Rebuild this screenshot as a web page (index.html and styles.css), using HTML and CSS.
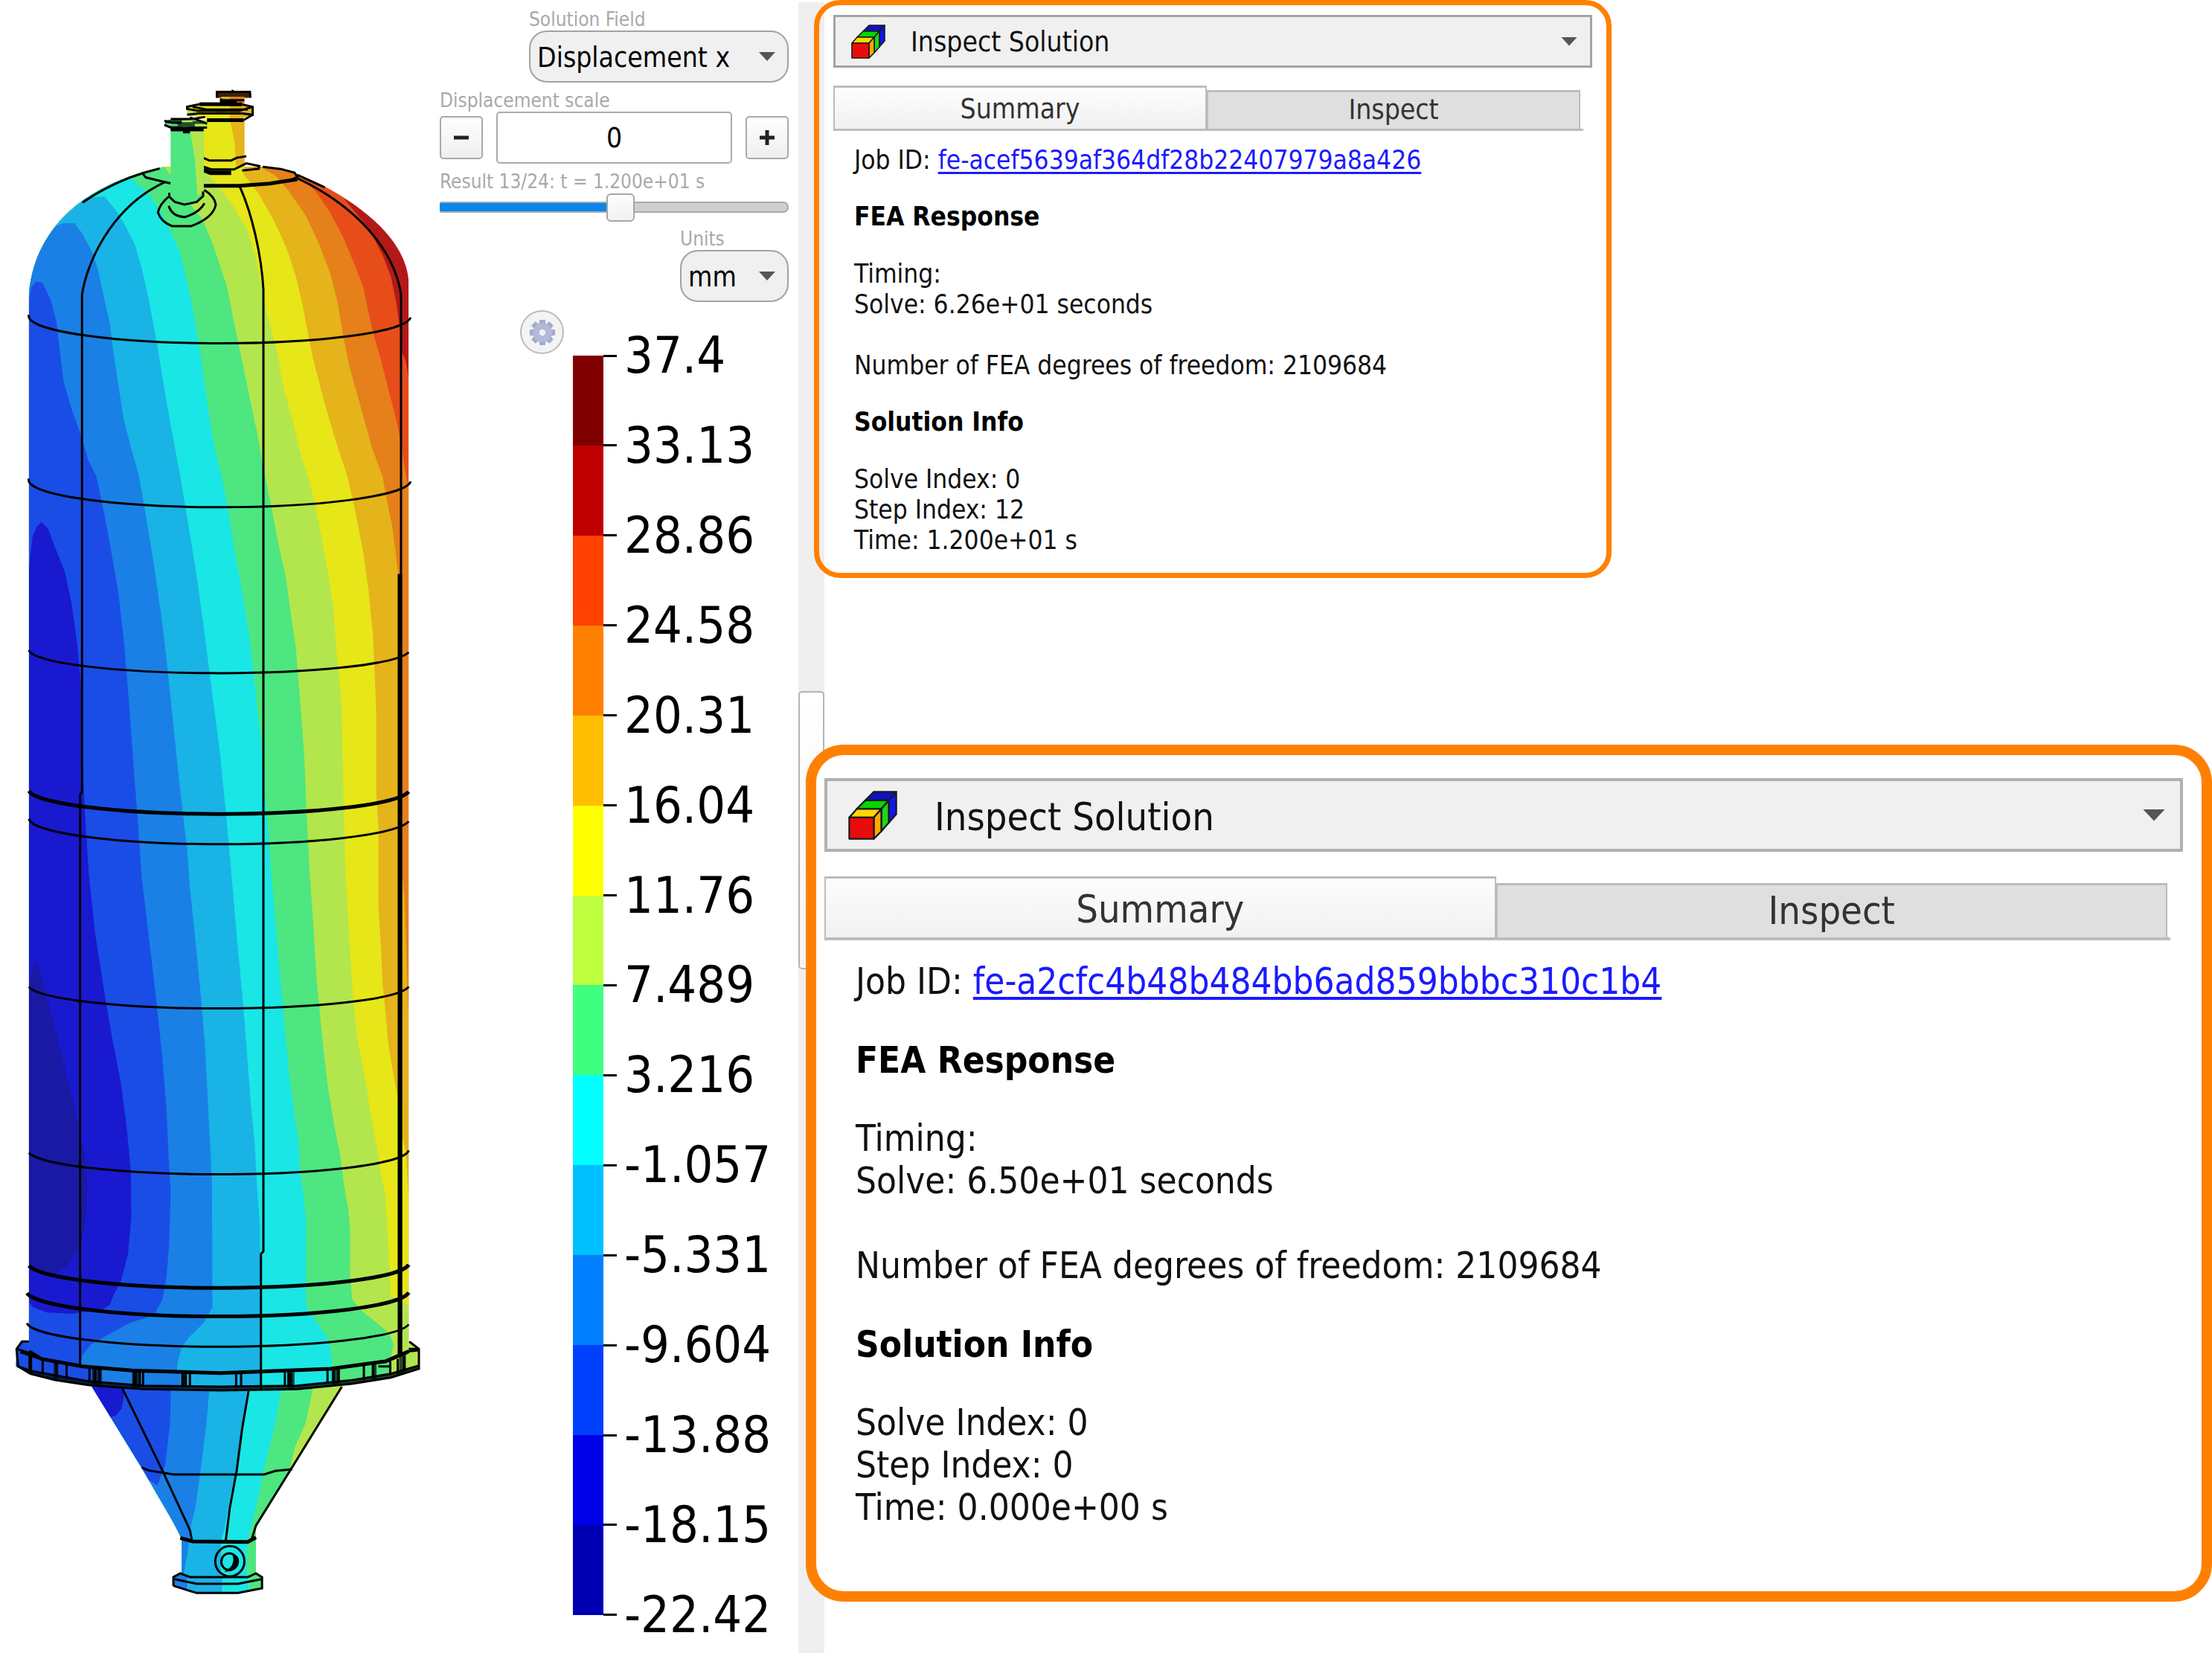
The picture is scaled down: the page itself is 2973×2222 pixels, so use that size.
FILE: index.html
```html
<!DOCTYPE html>
<html lang="en">
<head>
<meta charset="utf-8">
<title>Inspect Solution</title>
<link rel="stylesheet" href="styles.css">
</head>
<body>
<svg class="defs" width="0" height="0" aria-hidden="true">
  <symbol id="cube" viewBox="0 0 46 46">
    <g stroke="#1a1a1a" stroke-width="1.6" stroke-linejoin="round">
      <path d="M16 9L24 1H45L38 9z" fill="#1010c8"/>
      <path d="M38 9L45 1V22L38 30z" fill="#1414f0"/>
      <path d="M8 17L16 9H38L31 17z" fill="#00d800"/>
      <path d="M31 17L38 9V30L31 38z" fill="#1fd41f"/>
      <path d="M1 25L8 17H31L24 25z" fill="#ffd800"/>
      <path d="M24 25L31 17V38L24 45z" fill="#ffa800"/>
      <path d="M1 25H24V45H1z" fill="#ea0c0c"/>
    </g>
  </symbol>
</svg>

<main class="page">
  <section class="viewer" aria-label="Result view">
    <svg class="model" viewBox="0 0 591 2222" role="img" aria-label="Pressure vessel, displacement x">
      <defs>
        <clipPath id="shell"><path d="M105 830C120 620 260 420 600 347H950Q1020 350 1080 375C1260 450 1475 600 1485 780V4820L1450 4860 1200 4900 950 4915 600 4905 300 4885 105 4820z"/></clipPath>
        <clipPath id="cone"><path d="M330 545L515 880 630 1100 660 1165V1320H930V1120L1062 880 1248 550z"/></clipPath>
        <clipPath id="flange"><path d="M60 400L80 370H105V410L150 440 300 470 480 487 800 497 1200 480 1400 450 1485 410 1487 370 1524 400 1522 480 1420 515 1280 540 1080 562 800 567 520 562 320 545 200 525 110 500 58 470z"/></clipPath>
      </defs>

      <g transform="translate(0 1680) scale(.36992 .33333)">
        <g clip-path="url(#cone)">
          <path fill="#e6e619" d="M300 500H1300V1400H300z"/>
          <path fill="#b3e64d" d="M300 500H1250L1200 640 1050 900V1400H300z"/>
          <path fill="#4de680" d="M300 500H1148L1110 700 1070 800 1052 890V1400H300z"/>
          <path fill="#1ae6e6" d="M300 500H1032L1000 700 960 880 930 1040 905 1150 897 1200V1400H300z"/>
          <path fill="#1ab3e6" d="M300 500H905L880 720 860 880 835 1000 815 1130 803 1170 800 1400H300z"/>
          <path fill="#1a80e6" d="M300 500H765L750 700 730 880 710 1040 690 1130 682 1220 665 1320H300z"/>
          <path fill="#1a4de6" d="M300 500H622L618 700 600 870 572 950 500 900z"/>
          <path fill="#1919d0" d="M300 500H450V590L442 640 420 670 380 680z"/>
        </g>
        <g class="edge">
          <path d="M445 560L590 890 690 1130 697 1170M903 570L880 720 860 890 835 1040 820 1175M1242 552L1060 880 930 1112 915 1165"/>
          <path d="M515 878L540 890 630 906H960L1000 892 1062 885"/>
          <path class="thick" d="M655 1162L700 1176 900 1178 930 1160"/>
        </g>
        <path fill="#1a80e6" d="M630 1320L655 1305 682 1320V1378L630 1355z"/>
        <path fill="#1ab3e6" d="M682 1318H808V1385H715L682 1378z"/>
        <path fill="#1ae6e6" d="M808 1318H905V1378L865 1385H808z"/>
        <path fill="#4de680" d="M905 1318L930 1305 952 1320V1365L905 1378z"/>
        <g class="edge">
          <path d="M630 1355V1320L655 1305 690 1320H900L930 1305 952 1320V1365L865 1384H715L630 1355M635 1328L715 1347H865L950 1328"/>
          <ellipse cx="835" cy="1256" rx="53" ry="61"/>
          <ellipse cx="833" cy="1258" rx="29" ry="34" fill="#1ae6e6"/>
        </g>
        <path d="M838 1222Q872 1232 868 1262 862 1298 815 1298 842 1280 846 1262 852 1238 838 1222z"/>
      </g>

      <g transform="translate(0 100) scale(.36992 .35714)">
        <g clip-path="url(#shell)">
          <path fill="#b31919" d="M0 300H1568V5000H0z"/>
          <path fill="#e64d19" d="M0 300H1100L1240 455 1340 580 1390 680 1420 760 1440 860 1450 935 1462 1050 1475 1080 1485 1145V5000H0z"/>
          <path fill="#e5801a" d="M0 300H1040L1085 375 1150 445 1200 520 1250 620 1290 720 1320 800 1340 900 1355 970 1380 1060 1410 1180 1440 1300 1460 1400 1470 1480 1485 1560V5000H0z"/>
          <path fill="#e5b31a" d="M0 300H900L940 345 1000 380 1050 440 1110 530 1160 640 1200 750 1225 850 1250 1000 1270 1100 1310 1250 1350 1400 1390 1512 1405 1600 1425 1700 1447 1880 1462 1900V3020L1470 3100 1478 3360 1485 3560V5000H0z"/>
          <path fill="#e6e619" d="M0 300H850L885 375 940 450 990 540 1040 650 1075 760 1100 870 1120 980 1140 1080 1180 1240 1220 1380 1262 1512 1290 1640 1320 1800 1340 1950 1355 2110 1360 2220 1367 2400V2700L1375 2830V3130L1383 3260 1390 3420 1400 3520 1410 3640 1425 3740 1445 3850 1463 3860V4000L1475 4060 1485 4240V5000H0z"/>
          <path fill="#b3e64d" d="M0 300H700L750 370 800 430 850 500 900 590 930 690 950 800 970 900 990 980 1010 1060 1030 1180 1060 1290 1090 1420 1118 1512 1145 1620 1170 1750 1195 1900 1210 2000 1225 2200 1240 2350 1245 2560 1250 2800 1255 3000 1262 3120 1270 3280 1283 3480 1300 3640 1330 3800 1350 3930 1370 4040 1380 4120 1400 4220 1405 4300 1415 4480 1420 4600 1450 4610 1485 4635V5000H0z"/>
          <path fill="#4de680" d="M0 350H600L700 500 735 545 770 630 800 720 825 800 840 880 860 980 880 1080 910 1230 940 1380 955 1470 965 1520 985 1620 1010 1760 1040 1900 1055 2020 1075 2160 1090 2350 1105 2560 1115 2800 1125 3000 1135 3150 1150 3400 1170 3620 1190 3800 1215 3960 1235 4060 1250 4180 1265 4270 1272 4350V4530L1280 4610 1310 4650 1370 4700 1415 4740 1430 4780 1420 4830V5000H0z"/>
          <path fill="#1ae6e6" d="M0 300H400L480 395 540 450 580 510 620 590 650 660 680 780 700 880 715 970 730 1060 745 1180 765 1320 785 1430 805 1512 830 1640 850 1780 880 1950 905 2110 920 2240 935 2390 950 2520 955 2680 965 2740 975 2850 985 3000 1000 3180 1015 3360 1030 3540 1050 3760 1070 3920 1085 4020 1090 4130 1105 4230 1112 4330V4640L1140 4680 1185 4750 1200 4790 1205 4850 1200 5000H0z"/>
          <path fill="#1ab3e6" d="M0 480L345 462 380 460 420 510 450 560 490 640 515 730 535 820 550 900 570 1010 595 1170 620 1320 640 1430 655 1512 685 1700 715 1890 740 2080 760 2240 780 2400 800 2560 815 2720 830 2880 842 3024 860 3240 880 3460 895 3650 910 3860 925 4020 935 4200 945 4340V5000H0z"/>
          <path fill="#1a80e6" d="M0 600L205 570 230 560H270L300 600 335 670 355 730 380 850 400 940 410 1030 430 1170 450 1300 480 1420 505 1512 530 1660 560 1850 585 2030 605 2200 625 2400 645 2600 660 2740 680 2920 690 3060 710 3260 730 3470 745 3660 755 3860 765 4060 770 4160 772 4640 740 4700 690 4750 660 4790 645 4850 640 5000H0z"/>
          <path fill="#1a4de6" d="M105 850L115 800 130 780 155 785 185 850 205 930 215 1020 230 1150 260 1260 295 1360 320 1450 350 1512 380 1660 405 1800 430 1950 450 2130 470 2380 485 2600 500 2800 515 3024 540 3240 565 3460 590 3700 605 3900 612 4060 620 4200 615 4400 605 4530 590 4610 560 4670 470 4700 400 4740 330 4780 300 4820 290 4860 300 5000H0V850z"/>
          <path fill="#1919d0" d="M105 1860L118 1740 135 1700 150 1685 175 1710 200 1780 235 1870 260 1990 280 2140 295 2300 300 2600 310 2800 322 3000 345 3230 380 3460 410 3640 440 3800 460 3960 475 4120 477 4300 465 4440 440 4540 410 4600 400 4630 370 4650 260 4665 170 4660 120 4640 105 4620z"/>
          <path fill="#1919a6" d="M105 3450L120 3350 133 3340 160 3430 200 3590 240 3760 270 3880 290 3990 310 4080 318 4180 310 4330 280 4430 240 4490 190 4520 140 4500 105 4480z"/>
        </g>
        <g class="edge">
          <path d="M298 2705V830C312 720 400 500 600 405M298 2700L291 2712V4860"/>
          <path d="M870 420C915 520 950 680 957 810V4430L948 4440V4915"/>
          <path d="M1080 390C1340 520 1440 700 1457 830V4860"/>
          <path class="heavy" d="M1453 1880V4860"/>
          <path d="M105 905A693 102 0 0 0 1492 915M105 1522A693 102 0 0 0 1492 1532M105 2167A693 90 0 0 0 1485 2175M105 2802A693 98 0 0 0 1485 2812M105 3434A693 90 0 0 0 1485 3434M105 4059A693 93 0 0 0 1485 4050M98 4700A696 94 0 0 0 1485 4705"/>
          <path class="thick" d="M105 2697A693 94 0 0 0 1485 2700M105 4484A693 94 0 0 0 1485 4480M98 4587A696 97 0 0 0 1485 4585"/>
          <path d="M300 482Q430 390 580 354M520 375L530 388 585 402 620 410M955 348L1020 356 1070 370 1080 385 1050 402M1080 378L1180 425"/>
          <path class="thick" d="M740 419H870L980 411 1080 395"/>
        </g>

        <path fill="#e6e619" d="M738 170H888V370H738z"/>
        <path fill="#e5b31a" d="M835 170H888V345H858L852 250z"/>
        <path fill="#e6e619" d="M680 120L720 110H880L918 122V150L880 165H740L680 152z"/>
        <path fill="#b3e64d" d="M680 138H706V158L680 152z"/>
        <path fill="#e5b31a" d="M835 112H880L918 122V150L880 165H835z"/>
        <path fill="#3a2208" d="M788 65H908V88H788z"/>
        <path fill="#e5801a" d="M835 84H888V110H835zM780 130H820V142H780z"/>
        <path fill="#e5b31a" d="M803 84H835V95H803z"/>
        <g class="edge">
          <path d="M788 88V66H908L910 88M845 58V66M803 90V108M806 97H888"/>
          <path class="thick" d="M806 103H860M725 112L880 113M752 172H885"/>
          <path d="M725 112L680 122V130L720 137H870L918 122M700 122L750 132H900M680 152L720 147H880L918 152V122L880 113M885 172L918 152"/>
          <path d="M740 315L760 324H840L860 314 895 308M740 348L770 358H850L895 335 942 345 940 355 880 362"/>
          <path class="heavy" d="M740 360L765 370H840"/>
        </g>
        <path fill="#4de680" d="M620 205H740V440L720 475 670 490 630 478 620 450z"/>
        <path fill="#b3e64d" d="M690 212H740V440L718 460 708 320 697 250z"/>
        <path fill="#244f2c" d="M600 173L640 168 752 180V200L700 208 600 195z"/>
        <path fill="#4de680" d="M602 184H645V194H602zM665 196H692V203H665z"/>
        <path fill="#b3e64d" d="M660 172H700V180H660zM708 186H752V196H708z"/>
        <g class="edge">
          <path d="M597 175L625 182H660M620 168H700L745 160M690 162L735 178 752 186M597 190L625 202 752 200"/>
          <path class="thick" d="M620 207H740M665 215H690"/>
          <path d="M615 445V460L635 480 670 490 715 480 738 458V440M613 495Q625 535 672 537 725 520 743 485M615 458Q578 490 574 520 585 555 625 571H695Q775 540 784 490 780 460 742 435"/>
        </g>
      </g>

      <g transform="translate(0 1680) scale(.36992 .33333)">
        <g clip-path="url(#flange)">
          <path fill="#b3e64d" d="M0 350H1568V600H0z"/>
          <path fill="#4de680" d="M0 350H1420V600H0z"/>
          <path fill="#1ae6e6" d="M0 350H1210V600H0z"/>
          <path fill="#1ab3e6" d="M0 350H945V600H0z"/>
          <path fill="#1a80e6" d="M0 350H655V600H0z"/>
          <path fill="#1a4de6" d="M0 350H340V600H0z"/>
          <path class="shade" d="M58 470L110 490 320 530 520 548 800 552 1080 548 1280 526 1420 500 1524 470V600H0z"/>
          <path class="shade" d="M335 470H370V550H335zM480 470H508V570H480zM1045 470H1070V570H1045zM1205 470H1235V570H1205zM1350 440H1368V560H1350zM1450 420H1475V530H1450zM195 440H212V540H195z"/>
        </g>
        <g class="edge">
          <path d="M105 370H80L60 400 66 470 110 500 200 525 320 545 520 562 800 567 1080 562 1280 540 1420 515 1522 480V400L1487 370M60 400L105 415M1524 400H1485"/>
          <path class="thick" d="M105 410L150 440 300 470 480 487 800 497 1200 480 1400 450 1485 410"/>
          <path d="M66 470L110 488 320 530 520 548 800 552 1080 548 1280 526 1420 500 1520 468"/>
          <path d="M155 440V495M205 458V515M242 462V520M325 475V535M345 475V540M362 480V540M508 490V550M520 490V552M675 498V555M690 498V555M858 498V555M876 498V555M948 498V560M1035 495V550M1048 495V550M1190 485V540M1212 482V540M1230 480V535M1322 468V525M1356 460V518M1418 450V505M1445 440V500M1468 430V490M1480 410L1522 405M1375 470H1415"/>
          <path class="thick" d="M110 430V498M75 410L140 435M490 490V550M665 498V555M1055 495V550"/>
        </g>
      </g>
    </svg>

    <form class="controls">
      <label class="caption field-w" for="field">Solution Field</label>
      <div class="drop field-w">
        <select id="field"><option>Displacement x</option></select>
      </div>
      <label class="caption second" for="scale">Displacement scale</label>
      <div class="stepper">
        <button type="button" class="step" aria-label="Decrease"><svg viewBox="0 0 20 20"><path d="M0 10H20"/></svg></button>
        <input id="scale" class="number" type="text" value="0">
        <button type="button" class="step" aria-label="Increase"><svg viewBox="0 0 20 20"><path d="M0 10H20M10 0V20"/></svg></button>
      </div>
      <label class="caption second" for="result">Result 13/24: t = 1.200e+01 s</label>
      <input id="result" class="slider" type="range" min="1" max="24" value="13">
      <label class="caption second units-w" for="units">Units</label>
      <div class="drop units-w">
        <select id="units"><option>mm</option></select>
      </div>
      <button type="button" class="gear" aria-label="Legend settings">
        <svg viewBox="-20 -20 40 40">
          <g fill="#a3abc9"><path id="tooth" d="M-4 -18H4L5 -9H-5zM-4 18H4L5 9H-5z"/><use href="#tooth" transform="rotate(45)"/><use href="#tooth" transform="rotate(90)"/><use href="#tooth" transform="rotate(135)"/></g>
          <circle r="9" fill="none" stroke="#b3b9d8" stroke-width="9"/><circle r="4" fill="#eef0f4"/>
        </svg>
      </button>
      <div class="legend">
        <div class="bar">
          <i style="background:#800000"></i><i style="background:#bf0000"></i><i style="background:#ff4000"></i><i style="background:#ff8000"></i><i style="background:#ffbf00"></i><i style="background:#ffff00"></i><i style="background:#bfff40"></i><i style="background:#40ff80"></i><i style="background:#00ffff"></i><i style="background:#00bfff"></i><i style="background:#0080ff"></i><i style="background:#0040ff"></i><i style="background:#0000e6"></i><i style="background:#0000b3"></i>
        </div>
        <ol class="ticks">
          <li>37.4</li><li>33.13</li><li>28.86</li><li>24.58</li><li>20.31</li><li>16.04</li><li>11.76</li><li>7.489</li><li>3.216</li><li>-1.057</li><li>-5.331</li><li>-9.604</li><li>-13.88</li><li>-18.15</li><li>-22.42</li>
        </ol>
      </div>
    </form>
  </section>

  <div class="scroll"><div class="scroll-thumb"></div></div>

  <div class="panels">
    <section class="panel small">
      <div class="combo">
        <svg class="cube" aria-hidden="true"><use href="#cube"/></svg>
        <select aria-label="Mode"><option>Inspect Solution</option></select>
      </div>
      <div class="tabs" role="tablist">
        <button type="button" role="tab" aria-selected="true">Summary</button>
        <button type="button" role="tab" aria-selected="false">Inspect</button>
      </div>
      <div class="report">
        <p>Job ID: <a href="#job-a">fe-acef5639af364df28b22407979a8a426</a></p>
        <h2>FEA Response</h2>
        <p>Timing:<br>Solve: 6.26e+01 seconds<br><br>Number of FEA degrees of freedom: 2109684</p>
        <h2>Solution Info</h2>
        <p>Solve Index: 0<br>Step Index: 12<br>Time: 1.200e+01 s</p>
      </div>
    </section>

    <section class="panel large">
      <div class="combo">
        <svg class="cube" aria-hidden="true"><use href="#cube"/></svg>
        <select aria-label="Mode"><option>Inspect Solution</option></select>
      </div>
      <div class="tabs" role="tablist">
        <button type="button" role="tab" aria-selected="true">Summary</button>
        <button type="button" role="tab" aria-selected="false">Inspect</button>
      </div>
      <div class="report">
        <p>Job ID: <a href="#job-b">fe-a2cfc4b48b484bb6ad859bbbc310c1b4</a></p>
        <h2>FEA Response</h2>
        <p>Timing:<br>Solve: 6.50e+01 seconds<br><br>Number of FEA degrees of freedom: 2109684</p>
        <h2>Solution Info</h2>
        <p>Solve Index: 0<br>Step Index: 0<br>Time: 0.000e+00 s</p>
      </div>
    </section>
  </div>
</main>
</body>
</html>
```
FILE: styles.css
```css
* { box-sizing: border-box; }

body {
  margin: 0;
  background: #fff;
  color: #000;
  font-family: "DejaVu Sans Condensed", "Noto Sans", sans-serif;
}

select, input, button { font: inherit; color: inherit; margin: 0; }

.defs { position: absolute; }

.page {
  display: grid;
  grid-template-columns: minmax(0, 1073fr) 35px minmax(0, 1865fr);
  min-height: 100vh;
}

/* Result view */
.viewer { display: flex; padding-right: 13px; }
.model { flex: 1; min-width: 0; align-self: flex-start; }
.edge { fill: none; stroke: #000; stroke-width: 3px; }
.edge * { vector-effect: non-scaling-stroke; }
.edge .thick { stroke-width: 5px; }
.edge .heavy { stroke-width: 6px; }
.shade { fill: rgba(0, 15, 20, .75); }

.controls {
  display: flex;
  flex-direction: column;
  width: 469px;
  padding: 11px 0 51px;
}
.caption { font-size: 26px; line-height: 30px; color: #a9a9a9; white-space: nowrap; }
.caption.second { margin-top: 9px; }
.field-w { width: 349px; align-self: flex-end; }
.units-w { width: 146px; align-self: flex-end; }

.drop, .combo { position: relative; }
.drop select {
  appearance: none;
  display: block;
  width: 100%;
  height: 70px;
  padding: 2px 9px 0;
  border: 2px solid #a2a2a2;
  border-radius: 24px;
  background: #f0f0f0;
  font-size: 37px;
}
.drop::after, .combo::after {
  content: "";
  position: absolute;
  top: 50%;
  right: 18px;
  width: 22px;
  height: 12px;
  margin-top: -6px;
  background: #555;
  clip-path: polygon(0 0, 100% 0, 50% 100%);
  pointer-events: none;
}

.stepper { display: flex; align-items: center; gap: 18px; }
.step {
  width: 58px;
  height: 58px;
  padding: 0;
  border: 2px solid #aaa;
  border-radius: 5px;
  background: linear-gradient(#fefefe, #efefef);
}
.step svg { display: block; width: 20px; margin: auto; fill: none; stroke: #222; stroke-width: 5px; }
.number {
  flex: 1;
  min-width: 0;
  height: 70px;
  border: 2px solid #aaa;
  border-radius: 5px;
  background: #fff;
  text-align: center;
  font-size: 37px;
}

.slider { appearance: none; display: block; width: 100%; height: 38px; background: none; }
.slider::-webkit-slider-runnable-track {
  height: 15px;
  border: 2px solid #aaa;
  border-left: 0;
  border-radius: 2px 7px 7px 2px;
  background: linear-gradient(90deg, #0a86ec 52%, #cfcfcf 52%) border-box;
}
.slider::-webkit-slider-thumb {
  appearance: none;
  width: 38px;
  height: 38px;
  margin-top: -13px;
  border: 2px solid #a6a6a6;
  border-radius: 6px;
  background: linear-gradient(#fdfdfd, #f1f1f1);
}

.gear {
  width: 59px;
  height: 59px;
  margin: 11px 0 2px 108px;
  padding: 0;
  border: 2px solid #bbb;
  border-radius: 50%;
  background: #f3f3f3;
}
.gear svg { display: block; width: 38px; margin: auto; }

.legend { flex: 1; display: flex; margin-left: 179px; }
.bar { width: 41px; display: flex; flex-direction: column; }
.bar i { flex: 1; }
.ticks {
  display: flex;
  flex-direction: column;
  justify-content: space-between;
  margin: -40px 0;
  padding: 0;
  list-style: none;
  font-size: 68px;
  line-height: 80px;
}
.ticks li { display: flex; align-items: center; gap: 10px; height: 80px; }
.ticks li::before { content: ""; width: 18px; height: 3px; background: #000; }

/* Scroll bar between the view and the panels */
.scroll { margin-top: 3px; padding-top: 926px; background: #efefef; }
.scroll-thumb {
  height: 374px;
  border: 2px solid #b4b4b4;
  border-radius: 5px;
  background: linear-gradient(#fff, #f4f4f4);
}

/* Solution panels */
.panels { display: flex; flex-direction: column; gap: 224px; }
.panel { position: relative; border: solid #ff8000; }
.small {
  width: 1072px;
  max-width: 100%;
  margin-left: -14px;
  padding: 13px 19px 23px;
  border-width: 7px;
  border-radius: 35px;
}
.large {
  margin-left: -25px;
  padding: 31px 25px 84px 11px;
  border-width: 14px;
  border-radius: 51px;
  background: #fff;
}

.combo select {
  appearance: none;
  display: block;
  width: 100%;
  border: 3px solid #a4a4a4;
  border-radius: 0;
  background: #f0f0f0;
  color: #111;
}
.cube { position: absolute; top: 50%; transform: translateY(-50%); }
.small .combo select { height: 71px; padding: 2px 101px 0; font-size: 37px; }
.small .cube { left: 24px; width: 46px; height: 46px; }
.small .combo::after { right: 20px; }
.large .combo select { height: 99px; border-width: 4px; border-color: #b0b0b0; padding: 4px 144px 0; font-size: 52px; }
.large .cube { left: 32px; width: 66px; height: 66px; }
.large .combo::after { right: 24px; width: 30px; height: 16px; margin-top: -8px; }

.tabs { display: flex; align-items: flex-end; border-bottom: 3px solid #bcbcbc; color: #333; }
.tabs button {
  flex: 1;
  padding: 0 0 2px;
  border: solid #bcbcbc;
  border-width: 3px 2px 0;
  background: #dfdfdf;
}
.tabs button[aria-selected="true"] { padding: 2px 0 0; background: linear-gradient(#fdfdfd, #f1f1f1); }
.small .tabs { margin: 24px 12px 0 0; padding-right: 4px; font-size: 37px; }
.small .tabs button { height: 52px; }
.small .tabs button[aria-selected="true"] { height: 58px; }
.large .tabs { margin: 33px 17px 0 0; padding-right: 4px; font-size: 52px; border-bottom-width: 4px; }
.large .tabs button { height: 73px; }
.large .tabs button[aria-selected="true"] { height: 82px; }

.report { color: #111; }
.report p { margin: 0; }
.report h2 { color: #000; font-size: inherit; }
.report a { color: #1a1aff; text-underline-offset: 4px; }
.small .report { margin: 19px 0 0 28px; font-size: 35px; line-height: 41px; }
.small h2 { margin: 35px 0 36px; }
.large .report { margin: 27px 0 0 42px; font-size: 49px; line-height: 57px; }
.large h2 { margin: 49px 0 48px; }
```
